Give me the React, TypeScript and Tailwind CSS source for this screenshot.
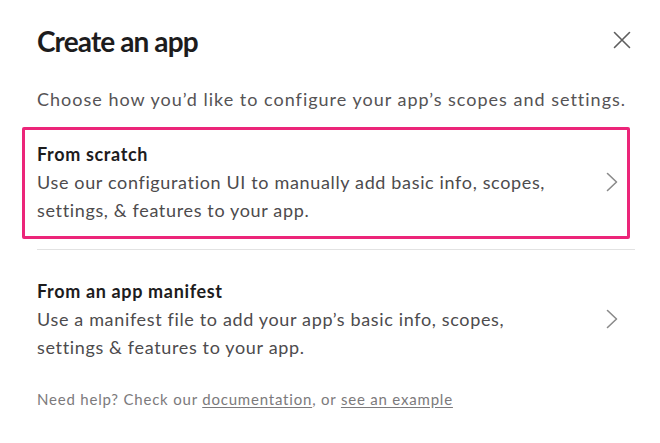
import React from "react"

function Chevron() {
    return (
        <svg width="12" height="20" viewBox="0 0 12 20" fill="none" className="shrink-0">
            <path d="M1.5 1.5 L10.5 10 L1.5 18.5" stroke="#8a8a8a" strokeWidth="1.6" strokeLinecap="round" strokeLinejoin="round" />
        </svg>
    )
}

function Option(props: { title: string, text: string, selected?: boolean }) {
    return (
        <div className={`flex items-center justify-between border-[3px] pl-[12px] pr-[9px] pt-[10px] pb-[12px] ${props.selected ? "border-[#ec2579] rounded-[2px]" : "border-transparent"}`}>
            <div className="w-[530px]">
                <div className="text-[18px] leading-[28px] font-bold tracking-[0.65px] text-[#1d1c1d]">{props.title}</div>
                <p className="text-[18px] leading-[28px] tracking-[0.65px] text-[#4d4b4d]">{props.text}</p>
            </div>
            <Chevron />
        </div>
    )
}

export default function App() {
    return (
        <div className="w-[660px] h-[443px] bg-white overflow-hidden" style={{ fontFamily: "Lato, 'Noto Sans', sans-serif" }}>
            <div className="flex items-center justify-between pl-[37px] pr-[25px] pt-[23px]">
                <h1 className="text-[28px] leading-[36px] font-bold tracking-[-0.9px] text-[#1d1c1d]">Create an app</h1>
                <button className="p-1 -mt-[2px]">
                    <svg width="18" height="18" viewBox="0 0 18 18" fill="none">
                        <path d="M1.5 1.5 L16.5 16.5 M16.5 1.5 L1.5 16.5" stroke="#5e5e5e" strokeWidth="1.6" strokeLinecap="round" />
                    </svg>
                </button>
            </div>

            <p className="mt-[26px] pl-[37px] text-[18px] leading-[28px] tracking-[1px] text-[#555355]">
                Choose how you’d like to configure your app’s scopes and settings.
            </p>

            <div className="mt-[14px] ml-[22px] w-[608px]">
                <Option
                    selected
                    title="From scratch"
                    text="Use our configuration UI to manually add basic info, scopes, settings, & features to your app."
                />
            </div>

            <div className="mt-[10px] ml-[37px] w-[598px] border-t border-[#e2e2e2]" />

            <div className="mt-[14px] ml-[22px] w-[608px]">
                <Option
                    title="From an app manifest"
                    text="Use a manifest file to add your app’s basic info, scopes, settings & features to your app."
                />
            </div>

            <p className="mt-[13px] pl-[37px] text-[15px] leading-[20px] tracking-[0.8px] text-[#7c7a7c]">
                Need help? Check our <a className="underline underline-offset-2">documentation</a>, or <a className="underline underline-offset-2">see an example</a>
            </p>
        </div>
    )
}
